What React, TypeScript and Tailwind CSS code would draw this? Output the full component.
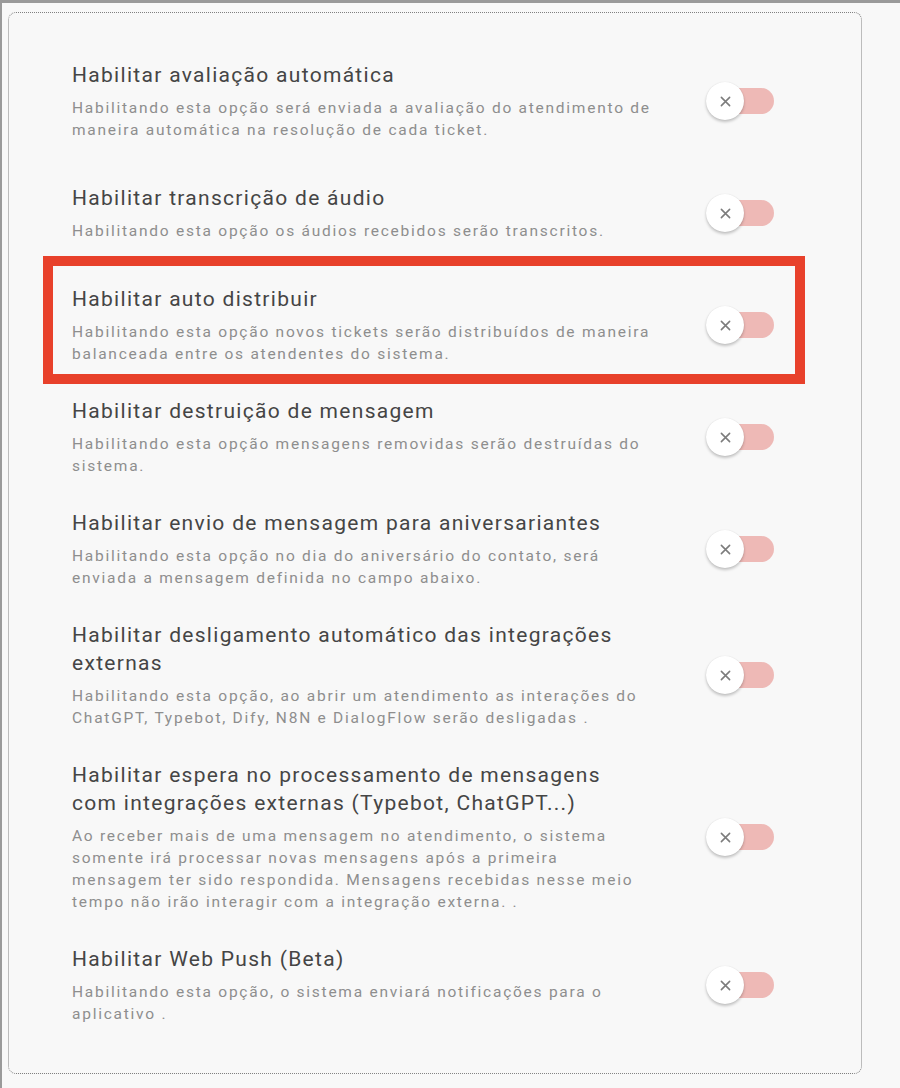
import React from 'react';

type Setting = {
  key: string;
  title: string[];
  description: string[];
  highlighted?: boolean;
};

const SETTINGS: Setting[] = [
  {
    key: 'autoRating',
    title: ['Habilitar avaliação automática'],
    description: [
      'Habilitando esta opção será enviada a avaliação do atendimento de',
      'maneira automática na resolução de cada ticket.',
    ],
  },
  {
    key: 'audioTranscription',
    title: ['Habilitar transcrição de áudio'],
    description: ['Habilitando esta opção os áudios recebidos serão transcritos.'],
  },
  {
    key: 'autoDistribute',
    title: ['Habilitar auto distribuir'],
    description: [
      'Habilitando esta opção novos tickets serão distribuídos de maneira',
      'balanceada entre os atendentes do sistema.',
    ],
    highlighted: true,
  },
  {
    key: 'destroyMessage',
    title: ['Habilitar destruição de mensagem'],
    description: [
      'Habilitando esta opção mensagens removidas serão destruídas do',
      'sistema.',
    ],
  },
  {
    key: 'birthday',
    title: ['Habilitar envio de mensagem para aniversariantes'],
    description: [
      'Habilitando esta opção no dia do aniversário do contato, será',
      'enviada a mensagem definida no campo abaixo.',
    ],
  },
  {
    key: 'autoDisableIntegrations',
    title: ['Habilitar desligamento automático das integrações', 'externas'],
    description: [
      'Habilitando esta opção, ao abrir um atendimento as interações do',
      'ChatGPT, Typebot, Dify, N8N e DialogFlow serão desligadas .',
    ],
  },
  {
    key: 'waitProcessing',
    title: ['Habilitar espera no processamento de mensagens', 'com integrações externas (Typebot, ChatGPT...)'],
    description: [
      'Ao receber mais de uma mensagem no atendimento, o sistema',
      'somente irá processar novas mensagens após a primeira',
      'mensagem ter sido respondida. Mensagens recebidas nesse meio',
      'tempo não irão interagir com a integração externa. .',
    ],
  },
  {
    key: 'webPush',
    title: ['Habilitar Web Push (Beta)'],
    description: [
      'Habilitando esta opção, o sistema enviará notificações para o',
      'aplicativo .',
    ],
  },
];

function OffSwitch() {
  return (
    <div className="relative w-[68px] h-[38px] shrink-0">
      {/* track */}
      <div className="absolute right-0 top-[6px] w-[52px] h-[26px] rounded-full bg-[#eeb9b6]" />
      {/* thumb */}
      <div className="absolute left-0 top-0 w-[38px] h-[38px] rounded-full bg-white shadow-[0_2px_3px_rgba(0,0,0,0.22),0_0_1px_rgba(0,0,0,0.12)] flex items-center justify-center">
        <svg width="11" height="11" viewBox="0 0 12 12" fill="none">
          <path d="M1.5 1.5 L10.5 10.5 M10.5 1.5 L1.5 10.5" stroke="#7c7c7c" strokeWidth="1.7" strokeLinecap="round" />
        </svg>
      </div>
    </div>
  );
}

export default function App() {
  return (
    <div
      className="min-h-screen bg-[#f8f8f8] border-t-[3px] border-l-2 border-[#9a9a9a] pt-[9px] pl-[6px]"
      style={{ fontFamily: 'Roboto, "Noto Sans", Arial, sans-serif' }}
    >
      <div className="w-[854px] rounded-lg border border-dotted border-[#808080] pl-[63px] pr-[87px] py-8">
        {SETTINGS.map((s) => (
          <div key={s.key} className="relative flex items-center justify-between min-h-[112px] py-4">
            {s.highlighted && (
              <div className="absolute -top-[13px] -bottom-[3px] -left-[29px] -right-[31px] border-[10px] border-[#e8412b] pointer-events-none" />
            )}
            <div className="flex flex-col">
              <div className="text-[21px] leading-[28px] text-[#454545] tracking-[1.3px]">
                {s.title.map((line) => (
                  <div key={line} className="whitespace-nowrap">{line}</div>
                ))}
              </div>
              <div className="mt-2 text-[15.5px] leading-[22px] text-[#8e8e8e] tracking-[1.75px]">
                {s.description.map((line) => (
                  <div key={line} className="whitespace-nowrap">{line}</div>
                ))}
              </div>
            </div>
            <OffSwitch />
          </div>
        ))}
      </div>
    </div>
  );
}
